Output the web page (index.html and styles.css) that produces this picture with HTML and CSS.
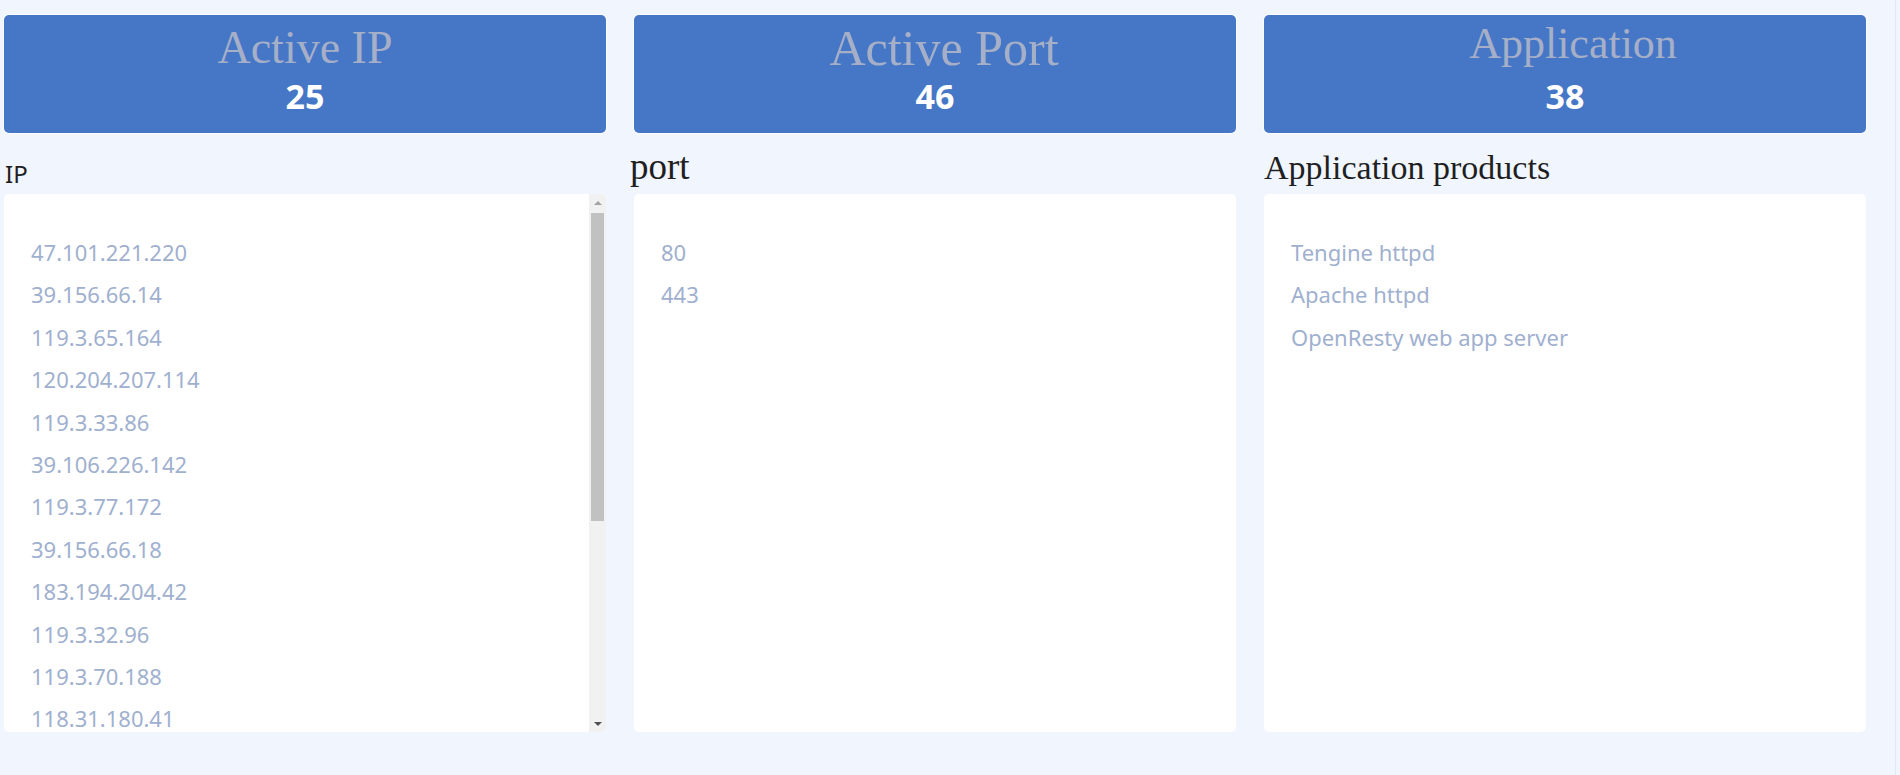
FILE: index.html
```html
<!DOCTYPE html>
<html lang="en">

<head>
    <meta charset="UTF-8">
    <meta name="viewport" content="width=device-width, initial-scale=1.0">
    <title>assets</title>
    <link rel="stylesheet" href="styles.css">
</head>

<body>

    <div class="page">
        <div class="grid">

            <div class="col">
                <div class="card">
                    <div class="cardTitle tIp">Active IP</div>
                    <div class="cardNum">25</div>
                </div>
                <div class="label labelIp">IP</div>
                <div class="panel">
                    <ul class="list">
                        <li>47.101.221.220</li>
                        <li>39.156.66.14</li>
                        <li>119.3.65.164</li>
                        <li>120.204.207.114</li>
                        <li>119.3.33.86</li>
                        <li>39.106.226.142</li>
                        <li>119.3.77.172</li>
                        <li>39.156.66.18</li>
                        <li>183.194.204.42</li>
                        <li>119.3.32.96</li>
                        <li>119.3.70.188</li>
                        <li>118.31.180.41</li>
                    </ul>
                    <div class="scrollbar">
                        <div class="sbBtn"><span class="arrowUp"></span></div>
                        <div class="sbTrack">
                            <div class="sbThumb"></div>
                        </div>
                        <div class="sbBtn"><span class="arrowDown"></span></div>
                    </div>
                </div>
            </div>

            <div class="col">
                <div class="card">
                    <div class="cardTitle tPort">Active Port</div>
                    <div class="cardNum">46</div>
                </div>
                <div class="label labelPort">port</div>
                <div class="panel">
                    <ul class="list">
                        <li>80</li>
                        <li>443</li>
                    </ul>
                </div>
            </div>

            <div class="col">
                <div class="card">
                    <div class="cardTitle tApp">Application</div>
                    <div class="cardNum">38</div>
                </div>
                <div class="label labelApp">Application products</div>
                <div class="panel">
                    <ul class="list">
                        <li>Tengine httpd</li>
                        <li>Apache httpd</li>
                        <li>OpenResty web app server</li>
                    </ul>
                </div>
            </div>

        </div>
    </div>

</body>

</html>
```

FILE: styles.css
```css
body {
    margin: 0;
    background-color: #f0f5fe;
}

.page {
    width: 1895px;
    height: 775px;
    border-right: 1px solid #e3e8f1;
}

.grid {
    display: grid;
    grid-template-columns: repeat(3, 602px);
    column-gap: 28px;
    padding: 15px 0 0 4px;
}

.col {
    display: flex;
    flex-direction: column;
}

.card {
    box-sizing: border-box;
    height: 118px;
    padding-top: 5px;
    background-color: #4677c6;
    border-radius: 5px;
    box-shadow: 0 0 0 1px #fafcff;
    text-align: center;
}

.cardTitle {
    font-family: "Liberation Serif", serif;
    color: #a6afc8;
    line-height: 56px;
    height: 56px;
}

.tIp {
    font-size: 46px;
}

.tPort {
    font-size: 50px;
    padding-left: 18px;
}

.tApp {
    font-size: 44px;
    line-height: 48px;
    padding-left: 16px;
}

.cardNum {
    font-family: "Noto Sans", sans-serif;
    font-weight: bold;
    font-size: 34px;
    line-height: 40px;
    color: #fff;
}

.label {
    box-sizing: border-box;
    height: 61px;
    line-height: 1;
    color: #1f1f1f;
}

.labelIp {
    font-family: "Noto Sans", sans-serif;
    font-size: 24px;
    padding-top: 29px;
    padding-left: 1px;
}

.labelPort {
    font-family: "Liberation Serif", serif;
    font-size: 37px;
    padding-top: 15px;
    margin-left: -4px;
}

.labelApp {
    font-family: "Liberation Serif", serif;
    font-size: 34px;
    padding-top: 18px;
}

.panel {
    display: flex;
    height: 538px;
    background-color: #fff;
    border-radius: 5px;
    overflow: hidden;
}

.list {
    flex: 1;
    margin: 0;
    padding: 37px 0 0 27px;
    list-style: none;
    font-family: "Noto Sans", sans-serif;
    font-size: 22px;
    line-height: 42.4px;
    color: #9fb0cf;
}

.scrollbar {
    display: flex;
    flex-direction: column;
    width: 17px;
    background-color: #f1f1f1;
}

.sbBtn {
    height: 17px;
    display: flex;
    align-items: center;
    justify-content: center;
}

.sbTrack {
    flex: 1;
    padding-top: 2px;
}

.sbThumb {
    height: 308px;
    margin: 0 2px;
    background-color: #c1c1c1;
}

.arrowUp {
    border-left: 4px solid transparent;
    border-right: 4px solid transparent;
    border-bottom: 4px solid #a3a3a3;
}

.arrowDown {
    border-left: 4px solid transparent;
    border-right: 4px solid transparent;
    border-top: 4px solid #505050;
}
```
